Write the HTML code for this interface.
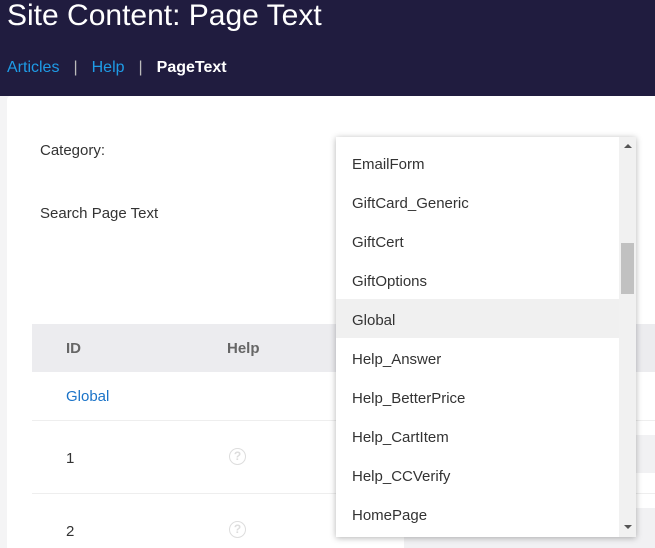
<!DOCTYPE html>
<html><head><style>
*{margin:0;padding:0;box-sizing:border-box}
html,body{width:655px;height:548px;overflow:hidden}
body{background:#f4f4f5;font-family:"Liberation Sans",sans-serif;position:relative}
.hdr{position:absolute;left:0;top:0;width:655px;height:96px;background:#201c3f}
h1{position:absolute;left:7px;top:-1px;font-size:30px;font-weight:normal;color:#fff;white-space:nowrap}
.bc{position:absolute;left:7px;top:59px;font-size:16px;color:#fff;white-space:nowrap}
.bc a{color:#1e9be6}
.bc .s{color:#bbb;margin:0 14px}
.card{position:absolute;left:7px;top:96px;width:648px;height:452px;background:#fff;border-radius:4px 0 0 0}
.lbl{position:absolute;font-size:15px;color:#333}
.tbl{position:absolute;left:32px;top:324px;width:623px;height:224px;background:#fff;overflow:hidden}
.th{position:absolute;left:0;top:0;width:100%;height:48px;background:#ececef}
.t{position:absolute;font-size:15px;color:#333}
.line{position:absolute;left:0;width:100%;height:1px;background:#eee}
.q{position:absolute;width:17px;height:17px;border:1.5px solid #ddd;border-radius:50%;color:#ddd;font-size:12px;font-weight:bold;text-align:center;line-height:14px}
.dd{position:absolute;left:336px;top:137px;width:300px;height:400px;background:#fff;box-shadow:0 1px 6px rgba(0,0,0,.3);overflow:hidden}
.it{position:absolute;left:0;width:283px;height:39px;padding-left:16px;line-height:39px;font-size:15px;color:#333}
.sb{position:absolute;left:283px;top:0;width:17px;height:400px;background:#f1f1f1}
</style></head><body>
<div class="hdr"></div>
<h1>Site Content: Page Text</h1>
<div class="bc"><a>Articles</a><span class="s">|</span><a>Help</a><span class="s">|</span><b>PageText</b></div>
<div class="card"></div>
<div class="lbl" style="left:40px;top:142px">Category:</div>
<div class="lbl" style="left:40px;top:205px">Search Page Text</div>
<div class="tbl">
<div class="th"></div>
<div class="t" style="left:34px;top:16px;color:#666;font-weight:bold">ID</div>
<div class="t" style="left:195px;top:16px;color:#666;font-weight:bold">Help</div>
<div class="t" style="left:34px;top:64px;color:#1a73c8">Global</div>
<div class="line" style="top:96px"></div>
<div class="t" style="left:34px;top:126px">1</div>
<div class="q" style="left:197px;top:124px">?</div>
<div class="line" style="top:169px"></div>
<div class="t" style="left:34px;top:199px">2</div>
<div class="q" style="left:197px;top:197px">?</div>
<div style="position:absolute;left:372px;top:111px;width:300px;height:38px;background:#f1f1f3"></div>
<div style="position:absolute;left:372px;top:184px;width:300px;height:60px;background:#f1f1f3"></div>
</div>
<div class="dd">
<div class="it" style="top:6px;padding-top:2px">EmailForm</div>
<div class="it" style="top:45px;padding-top:2px">GiftCard_Generic</div>
<div class="it" style="top:84px;padding-top:2px">GiftCert</div>
<div class="it" style="top:123px;padding-top:2px">GiftOptions</div>
<div class="it" style="top:162px;padding-top:2px;background:#f0f0f0">Global</div>
<div class="it" style="top:201px;padding-top:2px">Help_Answer</div>
<div class="it" style="top:240px;padding-top:2px">Help_BetterPrice</div>
<div class="it" style="top:279px;padding-top:2px">Help_CartItem</div>
<div class="it" style="top:318px;padding-top:2px">Help_CCVerify</div>
<div class="it" style="top:357px;padding-top:2px">HomePage</div>
<div class="sb">
<div style="position:absolute;left:5px;top:7px;border:4px solid transparent;border-bottom:4px solid #555;border-top:0;width:0"></div>
<div style="position:absolute;left:2px;top:106px;width:13px;height:51px;background:#c1c1c1"></div>
<div style="position:absolute;left:5px;top:388px;border:4px solid transparent;border-top:4px solid #555;border-bottom:0;width:0"></div>
</div>
</div>
</body></html>
